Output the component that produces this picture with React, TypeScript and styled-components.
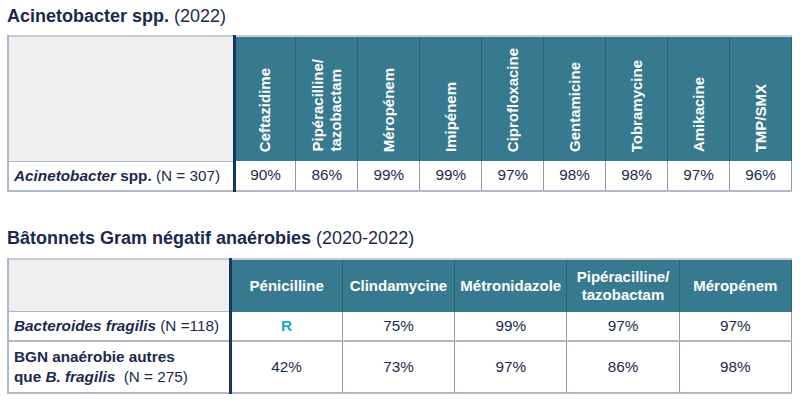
import React from 'react';
import styled, { createGlobalStyle } from 'styled-components';

const GlobalStyle = createGlobalStyle`
    body {
        margin: 0;
        background: #ffffff;
        font-family: 'Liberation Sans', Arial, sans-serif;
        color: #1b2a4c;
    }
`;

const Page = styled.div`
    width: 800px;
    height: 400px;
    padding: 5px 8px 0 7px;
    box-sizing: border-box;
    display: flex;
    flex-direction: column;
`;

const Title = styled.h2<{ $gap: number }>`
    margin: 0 0 ${({ $gap }) => $gap}px 0;
    font-size: 18px;
    font-weight: 700;
    line-height: 22px;
    color: #1b2a4c;
    white-space: nowrap;
    span {
        font-weight: 400;
    }
`;

const Table = styled.table<{ $mb?: number }>`
    border-collapse: collapse;
    table-layout: fixed;
    width: 785px;
    margin-bottom: ${({ $mb }) => $mb ?? 0}px;
    border-top: 2px solid #c5ccd8;
`;

const Corner = styled.th`
    background: #efefef;
    border-left: 2px solid #b0b8c8;
    border-right: 3px solid #17355e;
    border-bottom: 1px solid #b0b8c8;
    padding: 0;
`;

const HeadCell = styled.th`
    background: #377a8f;
    color: #ffffff;
    font-size: 15px;
    font-weight: 700;
    line-height: 18px;
    border-left: 1px solid #2a6077;
    border-right: 1px solid #2a6077;
    padding: 0;
    text-align: center;
`;

const HeadInner = styled.div<{ $h: number; $vertical?: boolean }>`
    height: ${({ $h }) => $h}px;
    box-sizing: border-box;
    display: flex;
    flex-direction: column;
    align-items: center;
    justify-content: ${({ $vertical }) => ($vertical ? 'flex-end' : 'center')};
    padding-bottom: ${({ $vertical }) => ($vertical ? 9 : 0)}px;
    overflow: hidden;
`;

const Rotated = styled.div`
    writing-mode: vertical-rl;
    transform: rotate(180deg);
    text-align: left;
    white-space: nowrap;
`;

const Label = styled.td`
    padding: 0 0 0 5px;
    font-size: 15.3px;
    line-height: 20px;
    border-left: 2px solid #b0b8c8;
    border-right: 3px solid #17355e;
    border-bottom: 2px solid #b0b8c8;
    vertical-align: middle;
    white-space: nowrap;
    b {
        font-weight: 700;
    }
    i {
        font-weight: 700;
        font-style: italic;
    }
`;

const RowInner = styled.div<{ $h: number }>`
    height: ${({ $h }) => $h}px;
    display: flex;
    flex-direction: column;
    justify-content: center;
`;

const Value = styled.td<{ $accent?: boolean }>`
    font-size: 15.3px;
    text-align: center;
    vertical-align: middle;
    padding: 0;
    border-left: 1px solid #8e9ab0;
    border-right: 1px solid #8e9ab0;
    border-bottom: 2px solid #b0b8c8;
    color: ${({ $accent }) => ($accent ? '#1ea7bd' : '#1b2a4c')};
    font-weight: ${({ $accent }) => ($accent ? 700 : 400)};
`;

const acinetoCols = [
    ['Ceftazidime'],
    ['Pipéracilline/', 'tazobactam'],
    ['Méropénem'],
    ['Imipénem'],
    ['Ciprofloxacine'],
    ['Gentamicine'],
    ['Tobramycine'],
    ['Amikacine'],
    ['TMP/SMX'],
];
const acinetoValues = ['90%', '86%', '99%', '99%', '97%', '98%', '98%', '97%', '96%'];

const anaeroCols = [
    ['Pénicilline'],
    ['Clindamycine'],
    ['Métronidazole'],
    ['Pipéracilline/', 'tazobactam'],
    ['Méropénem'],
];

const Lines = ({ lines }: { lines: string[] }) => (
    <>
        {lines.map((l, j) => (
            <React.Fragment key={j}>
                {l}
                {j < lines.length - 1 && <br />}
            </React.Fragment>
        ))}
    </>
);

const App = () => {
    return (
        <Page>
            <GlobalStyle />
            <Title $gap={8}>
                Acinetobacter spp. <span>(2022)</span>
            </Title>
            <Table $mb={35}>
                <colgroup>
                    <col style={{ width: 226 }} />
                    {acinetoCols.map((_, i) => (
                        <col key={i} />
                    ))}
                </colgroup>
                <thead>
                    <tr>
                        <Corner />
                        {acinetoCols.map((lines, i) => (
                            <HeadCell key={i}>
                                <HeadInner $h={124} $vertical>
                                    <Rotated>
                                        <Lines lines={lines} />
                                    </Rotated>
                                </HeadInner>
                            </HeadCell>
                        ))}
                    </tr>
                </thead>
                <tbody>
                    <tr>
                        <Label>
                            <RowInner $h={28}>
                                <span>
                                    <i>Acinetobacter</i> <b>spp.</b> (N = 307)
                                </span>
                            </RowInner>
                        </Label>
                        {acinetoValues.map((v, i) => (
                            <Value key={i}>{v}</Value>
                        ))}
                    </tr>
                </tbody>
            </Table>

            <Title $gap={9}>
                Bâtonnets Gram négatif anaérobies <span>(2020-2022)</span>
            </Title>
            <Table>
                <colgroup>
                    <col style={{ width: 222 }} />
                    {anaeroCols.map((_, i) => (
                        <col key={i} />
                    ))}
                </colgroup>
                <thead>
                    <tr>
                        <Corner />
                        {anaeroCols.map((lines, i) => (
                            <HeadCell key={i}>
                                <HeadInner $h={52}>
                                    <div>
                                        <Lines lines={lines} />
                                    </div>
                                </HeadInner>
                            </HeadCell>
                        ))}
                    </tr>
                </thead>
                <tbody>
                    <tr>
                        <Label>
                            <RowInner $h={28}>
                                <span>
                                    <i>Bacteroides fragilis</i> (N =118)
                                </span>
                            </RowInner>
                        </Label>
                        <Value $accent>R</Value>
                        <Value>75%</Value>
                        <Value>99%</Value>
                        <Value>97%</Value>
                        <Value>97%</Value>
                    </tr>
                    <tr>
                        <Label>
                            <RowInner $h={50}>
                                <span>
                                    <b>BGN anaérobie autres</b>
                                    <br />
                                    <b>que </b>
                                    <i>B. fragilis</i> &nbsp;(N = 275)
                                </span>
                            </RowInner>
                        </Label>
                        <Value>42%</Value>
                        <Value>73%</Value>
                        <Value>97%</Value>
                        <Value>86%</Value>
                        <Value>98%</Value>
                    </tr>
                </tbody>
            </Table>
        </Page>
    );
};

export default App;
